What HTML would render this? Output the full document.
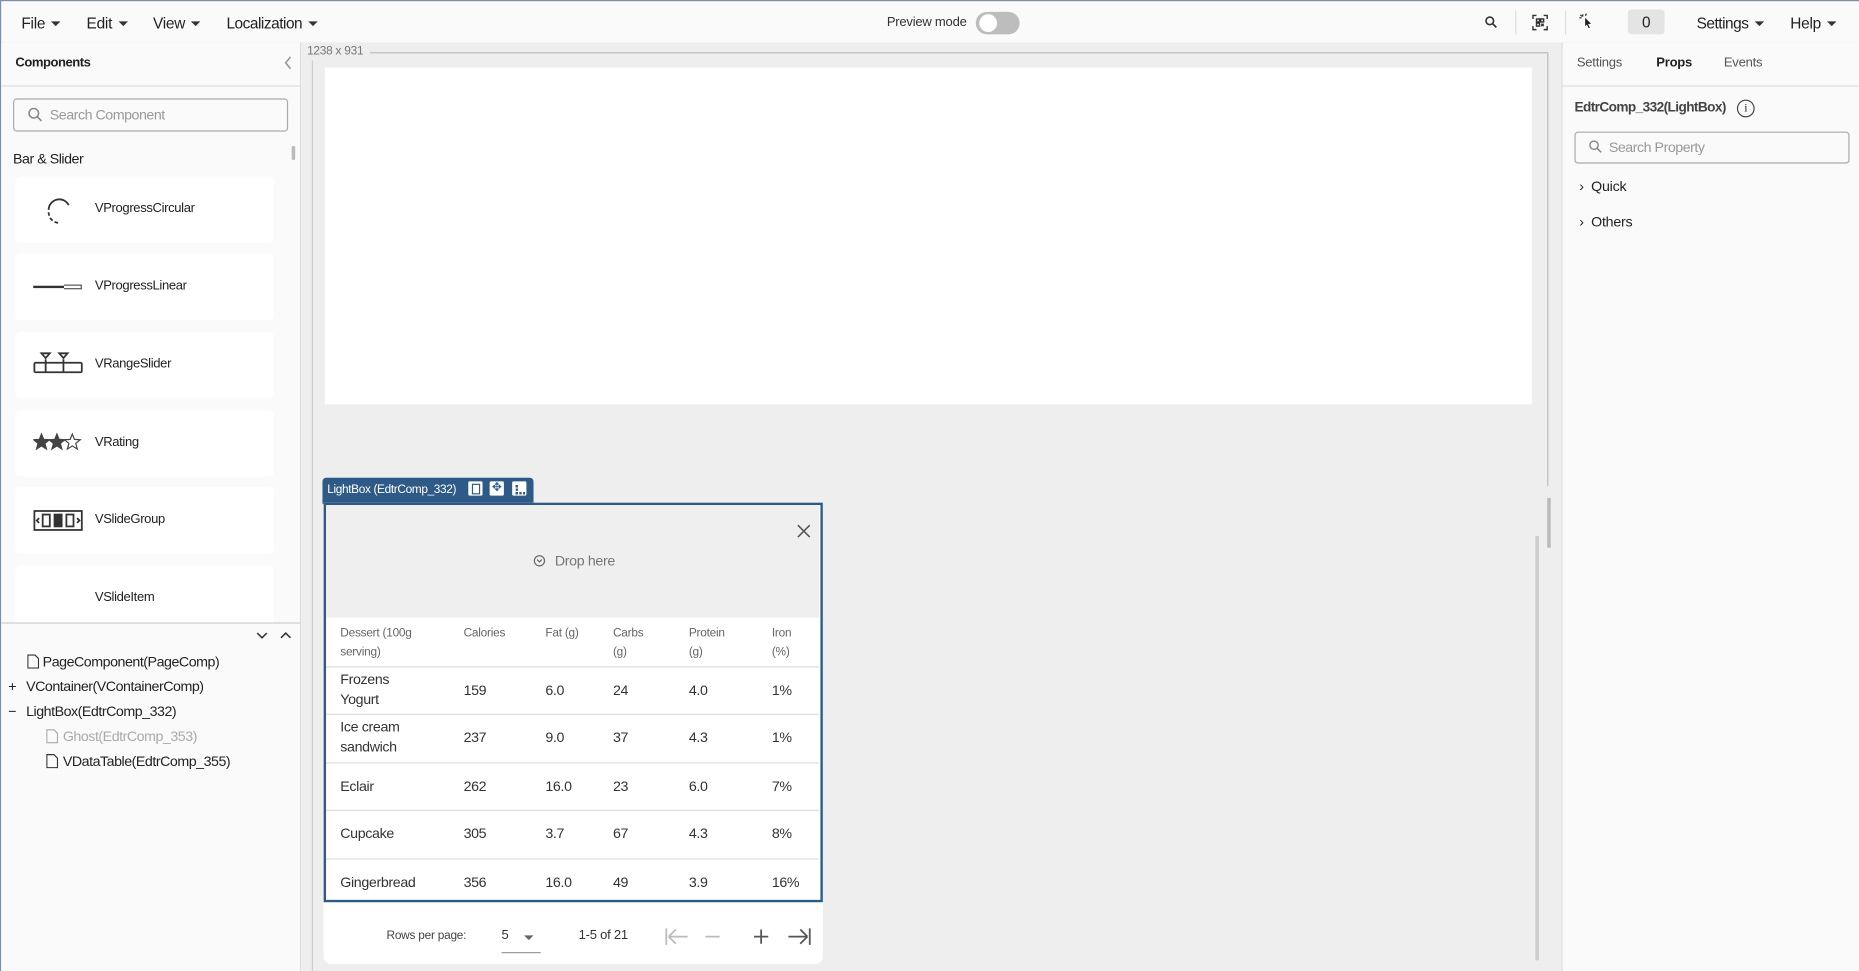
<!DOCTYPE html>
<html><head><meta charset="utf-8"><style>
html,body{margin:0;padding:0;width:1859px;height:971px;overflow:hidden;background:#fafafa}
#w{position:absolute;left:0;top:0;width:1568px;height:819px;transform:scale(1.18559);transform-origin:0 0;font-family:"Liberation Sans",sans-serif;color:#222;font-size:12px;letter-spacing:-0.2px}
.a{position:absolute;white-space:nowrap}
.caret{display:inline-block;width:0;height:0;border-left:4px solid transparent;border-right:4px solid transparent;border-top:4px solid #333;margin-left:5px;vertical-align:2px}
.card{position:absolute;left:13px;width:218px;height:56px;background:#fff;border-radius:4px}
.card span{position:absolute;left:67px;top:21px;font-size:11px;letter-spacing:-0.3px}
.th{position:absolute;font-size:10px;color:#666;line-height:16px}
.td{position:absolute;font-size:12px;color:#333;line-height:17px;letter-spacing:-0.3px}
.rl{position:absolute;left:275px;width:416px;height:1px;background:#ddd}
</style></head><body><div id="w">
<div class="a" style="left:0;top:0;width:1568px;height:35px;background:#fafafa;border-bottom:1px solid #ddd;border-top:1px solid #7a90a8"></div>
<div class="a" style="left:0;top:0;width:1px;height:819px;background:#7a90a8"></div>
<div class="a" style="left:18px;top:12px;font-size:13px">File<i class="caret"></i></div>
<div class="a" style="left:73px;top:12px;font-size:13px">Edit<i class="caret"></i></div>
<div class="a" style="left:129px;top:12px;font-size:13px">View<i class="caret"></i></div>
<div class="a" style="left:191px;top:12px;font-size:13px;letter-spacing:-0.4px">Localization<i class="caret"></i></div>
<div class="a" style="left:748px;top:13px;font-size:11px;color:#333">Preview mode</div>
<div class="a" style="left:823px;top:10px;width:37px;height:19px;border-radius:10px;background:#bdbdbd"></div>
<div class="a" style="left:826px;top:12px;width:15px;height:15px;border-radius:50%;background:#fff"></div>
<svg class="a" style="left:1252px;top:13px" width="11" height="11" viewBox="0 0 12 12"><circle cx="5" cy="5" r="3.5" fill="none" stroke="#333" stroke-width="1.5"/><path d="M7.5 7.5L11 11" stroke="#333" stroke-width="1.6"/></svg>
<div class="a" style="left:1278px;top:9px;width:1px;height:20px;background:#ddd"></div>
<svg class="a" style="left:1292px;top:12px" width="14" height="14" viewBox="0 0 14 14" fill="none" stroke="#333" stroke-width="1.2"><path d="M1 4V1h3M10 1h3v3M13 10v3h-3M4 13H1v-3"/><rect x="4" y="4" width="2.5" height="2.5"/><rect x="7.5" y="4" width="2.5" height="2.5"/><rect x="4" y="7.5" width="2.5" height="2.5"/><path d="M8 8l2 2M10 8l-2 2"/></svg>
<div class="a" style="left:1320px;top:9px;width:1px;height:20px;background:#ddd"></div>
<svg class="a" style="left:1332px;top:11px" width="12" height="14" viewBox="0 0 12 14"><path d="M5 4l5 5-2.5 .3 1.5 3-1 .5-1.5-3L5 11z" fill="#222"/><path d="M3 1v2M0 4h2M1 1.5l1.3 1.3M6 0.5l-.7 1.8" stroke="#222" stroke-width="1"/></svg>
<div class="a" style="left:1373px;top:8px;width:31px;height:21px;background:#e4e4e4;border-radius:3px;text-align:center;line-height:21px;font-size:13px">0</div>
<div class="a" style="left:1431px;top:12px;font-size:13px;letter-spacing:-0.4px">Settings<i class="caret"></i></div>
<div class="a" style="left:1510px;top:12px;font-size:13px">Help<i class="caret"></i></div>

<div class="a" style="left:1px;top:36px;width:252px;height:783px;background:#fafafa;border-right:1px solid #ddd"></div>
<div class="a" style="left:13px;top:47px;font-size:11px;font-weight:bold;letter-spacing:-0.4px">Components</div>
<svg class="a" style="left:239px;top:47px" width="8" height="12" viewBox="0 0 8 12"><path d="M6 1L2 6l4 5" fill="none" stroke="#999" stroke-width="1.4"/></svg>
<div class="a" style="left:1px;top:72px;width:252px;height:1px;background:#ddd"></div>
<div class="a" style="left:11px;top:83px;width:230px;height:26px;border:1px solid #aaa;border-radius:3px;background:#fafafa"></div>
<svg class="a" style="left:23px;top:90px" width="13" height="13" viewBox="0 0 13 13"><circle cx="5.5" cy="5.5" r="4" fill="none" stroke="#888" stroke-width="1.3"/><path d="M8.5 8.5L12 12" stroke="#888" stroke-width="1.4"/></svg>
<div class="a" style="left:42px;top:90px;font-size:12px;color:#999;letter-spacing:-0.4px">Search Component</div>
<div class="a" style="left:11px;top:127px;font-size:12px;color:#222;letter-spacing:-0.4px">Bar &amp; Slider</div>
<div class="a" style="left:246px;top:123px;width:3px;height:12px;background:#bbb;border-radius:2px"></div>
<div style="position:absolute;left:0;top:140px;width:253px;height:385px;overflow:hidden">
<div class="card" style="top:9px"><span>VProgressCircular</span>
<svg style="position:absolute;left:22px;top:14px" width="28" height="28" viewBox="0 0 28 28"><path d="M6 14a9 9 0 0 1 17-4" fill="none" stroke="#333" stroke-width="1.5"/><path d="M6 16a9 9 0 0 0 9 9" fill="none" stroke="#333" stroke-width="1.5" stroke-dasharray="3 2"/></svg></div>
<div class="card" style="top:74px"><span>VProgressLinear</span><div style="position:absolute;left:15px;top:27px;width:26px;height:2px;background:#333"></div><div style="position:absolute;left:41px;top:26px;width:14px;height:2px;border:1px solid #555;border-left:none"></div></div>
<div class="card" style="top:140px"><span>VRangeSlider</span>
<svg style="position:absolute;left:15px;top:16px" width="42" height="22" viewBox="0 0 42 22" fill="none" stroke="#333" stroke-width="1.5"><path d="M7 2h7l-3.5 4zM22 2h7l-3.5 4z"/><rect x="1" y="10" width="40" height="8" rx="1"/><path d="M10.5 7v11M25.5 7v11"/></svg></div>
<div class="card" style="top:206px"><span>VRating</span>
<svg style="position:absolute;left:15px;top:19px" width="42" height="16" viewBox="0 0 42 16"><g stroke="#444" stroke-width="1"><path id="s" d="M7 1l1.8 4.6 4.9.3-3.8 3.1 1.3 4.8L7 11.1 2.8 13.8l1.3-4.8L.3 5.9l4.9-.3z" fill="#444"/><path d="M20 1l1.8 4.6 4.9.3-3.8 3.1 1.3 4.8L20 11.1l-4.2 2.7 1.3-4.8-3.8-3.1 4.9-.3z" fill="#444"/><path d="M33 1l1.8 4.6 4.9.3-3.8 3.1 1.3 4.8L33 11.1l-4.2 2.7 1.3-4.8-3.8-3.1 4.9-.3z" fill="none"/></g></svg></div>
<div class="card" style="top:271px"><span>VSlideGroup</span>
<svg style="position:absolute;left:15px;top:19px" width="42" height="18" viewBox="0 0 42 18" fill="none" stroke="#333" stroke-width="1.5"><rect x="1" y="1" width="40" height="16"/><rect x="8" y="4" width="6" height="10"/><rect x="18" y="4" width="6" height="10" fill="#333"/><rect x="28" y="4" width="6" height="10"/><path d="M5 7l-2 2 2 2M37 7l2 2-2 2"/></svg></div>
<div class="card" style="top:337px"><span>VSlideItem</span></div>
</div>
<div class="a" style="left:1px;top:525px;width:252px;height:1px;background:#ccc"></div>
<svg class="a" style="left:216px;top:532px" width="32" height="8" viewBox="0 0 32 8" fill="none" stroke="#333" stroke-width="1.3"><path d="M1 2l4 4 4-4M21 6l4-4 4 4"/></svg>
<svg class="a" style="left:23px;top:552px" width="10" height="12" viewBox="0 0 10 12" fill="none" stroke="#333"><path d="M.5.5h6l3 3v8h-9z"/></svg>
<div class="a" style="left:36px;top:551px;font-size:12px;letter-spacing:-0.4px">PageComponent(PageComp)</div>
<div class="a" style="left:7px;top:572px;font-size:12px">+</div>
<div class="a" style="left:22px;top:572px;font-size:12px;letter-spacing:-0.4px">VContainer(VContainerComp)</div>
<div class="a" style="left:7px;top:593px;font-size:12px">−</div>
<div class="a" style="left:22px;top:593px;font-size:12px;letter-spacing:-0.4px">LightBox(EdtrComp_332)</div>
<svg class="a" style="left:39px;top:615px" width="10" height="12" viewBox="0 0 10 12" fill="none" stroke="#aaa"><path d="M.5.5h6l3 3v8h-9z"/></svg>
<div class="a" style="left:53px;top:614px;font-size:12px;color:#aaa;letter-spacing:-0.4px">Ghost(EdtrComp_353)</div>
<svg class="a" style="left:39px;top:636px" width="10" height="12" viewBox="0 0 10 12" fill="none" stroke="#333"><path d="M.5.5h6l3 3v8h-9z"/></svg>
<div class="a" style="left:53px;top:635px;font-size:12px;letter-spacing:-0.4px">VDataTable(EdtrComp_355)</div>

<div class="a" style="left:254px;top:36px;width:1063px;height:783px;background:#edeeed"></div>
<div class="a" style="left:259px;top:38px;font-size:10px;color:#777">1238 x 931</div>
<div class="a" style="left:312px;top:44px;width:993px;height:1px;background:#bbb"></div>
<div class="a" style="left:1305px;top:44px;width:1px;height:366px;background:#bbb"></div>
<div class="a" style="left:263px;top:51px;width:1px;height:768px;background:#ccc"></div>
<div class="a" style="left:274px;top:57px;width:1018px;height:284px;background:#fff"></div>
<div class="a" style="left:1295px;top:452px;width:3px;height:358px;background:#ccc"></div>
<div class="a" style="left:1305px;top:420px;width:3px;height:42px;background:#bbb"></div>

<div class="a" style="left:272px;top:403px;width:178px;height:22px;background:#2d5a87;border-radius:3px 3px 0 0"></div>
<div class="a" style="left:276px;top:408px;font-size:10px;color:#fff;letter-spacing:-0.3px">LightBox (EdtrComp_332)</div>
<div class="a" style="left:395px;top:406px;width:12px;height:12px;background:#fff;border-radius:1px"></div>
<div class="a" style="left:413px;top:406px;width:12px;height:12px;background:#fff;border-radius:1px;font-size:10px;text-align:center;line-height:12px;color:#2d5a87">✥</div>
<div class="a" style="left:432px;top:406px;width:12px;height:12px;background:#fff;border-radius:1px"></div>
<div class="a" style="left:398px;top:408px;width:5px;height:7px;border:1px solid #2d5a87"></div>
<div class="a" style="left:435px;top:409px;width:6px;height:6px;border-left:2px dotted #2d5a87;border-bottom:2px dotted #2d5a87"></div>
<div class="a" style="left:273px;top:761px;width:421px;height:52px;background:#fff;border-radius:0 0 6px 6px"></div>
<div class="a" style="left:273px;top:424px;width:417px;height:333px;border:2px solid #2d5a87;background:#fff"></div>
<div class="a" style="left:275px;top:426px;width:416px;height:95px;background:#efefef"></div>
<svg class="a" style="left:672px;top:442px" width="12" height="12" viewBox="0 0 12 12" stroke="#555" stroke-width="1.3"><path d="M1 1l10 10M11 1L1 11"/></svg>
<svg class="a" style="left:450px;top:468px" width="10" height="10" viewBox="0 0 10 10" fill="none" stroke="#666"><circle cx="5" cy="5" r="4.3"/><path d="M3 4l2 2 2-2"/></svg>
<div class="a" style="left:468px;top:466px;font-size:12px;color:#777;letter-spacing:-0.3px">Drop here</div>
<div class="th" style="left:287px;top:527px">Dessert (100g<br>serving)</div>
<div class="th" style="left:391px;top:527px">Calories</div>
<div class="th" style="left:460px;top:527px">Fat (g)</div>
<div class="th" style="left:517px;top:527px">Carbs<br>(g)</div>
<div class="th" style="left:581px;top:527px">Protein<br>(g)</div>
<div class="th" style="left:651px;top:527px">Iron<br>(%)</div>
<div class="rl" style="top:562px"></div><div class="rl" style="top:602px"></div><div class="rl" style="top:643px"></div><div class="rl" style="top:683px"></div><div class="rl" style="top:724px"></div>
<div class="td" style="left:287px;top:565px">Frozens<br>Yogurt</div><div class="td" style="left:391px;top:574px">159</div><div class="td" style="left:460px;top:574px">6.0</div><div class="td" style="left:517px;top:574px">24</div><div class="td" style="left:581px;top:574px">4.0</div><div class="td" style="left:651px;top:574px">1%</div>
<div class="td" style="left:287px;top:605px">Ice cream<br>sandwich</div><div class="td" style="left:391px;top:614px">237</div><div class="td" style="left:460px;top:614px">9.0</div><div class="td" style="left:517px;top:614px">37</div><div class="td" style="left:581px;top:614px">4.3</div><div class="td" style="left:651px;top:614px">1%</div>
<div class="td" style="left:287px;top:655px">Eclair</div><div class="td" style="left:391px;top:655px">262</div><div class="td" style="left:460px;top:655px">16.0</div><div class="td" style="left:517px;top:655px">23</div><div class="td" style="left:581px;top:655px">6.0</div><div class="td" style="left:651px;top:655px">7%</div>
<div class="td" style="left:287px;top:695px">Cupcake</div><div class="td" style="left:391px;top:695px">305</div><div class="td" style="left:460px;top:695px">3.7</div><div class="td" style="left:517px;top:695px">67</div><div class="td" style="left:581px;top:695px">4.3</div><div class="td" style="left:651px;top:695px">8%</div>
<div class="td" style="left:287px;top:736px">Gingerbread</div><div class="td" style="left:391px;top:736px">356</div><div class="td" style="left:460px;top:736px">16.0</div><div class="td" style="left:517px;top:736px">49</div><div class="td" style="left:581px;top:736px">3.9</div><div class="td" style="left:651px;top:736px">16%</div>
<div class="a" style="left:326px;top:784px;font-size:10px;color:#444">Rows per page:</div>
<div class="a" style="left:423px;top:783px;font-size:11px;color:#333">5</div>
<div class="a" style="left:442px;top:789px;border-left:4px solid transparent;border-right:4px solid transparent;border-top:4px solid #666"></div>
<div class="a" style="left:423px;top:803px;width:33px;height:1px;background:#999"></div>
<div class="a" style="left:488px;top:783px;font-size:11px;color:#333">1-5 of 21</div>
<svg class="a" style="left:561px;top:782px" width="124" height="16" viewBox="0 0 124 16" fill="none" stroke-width="1.5"><path d="M1 1v14M3 8h16M3 8l6-6M3 8l6 6" stroke="#bbb"/><path d="M34 8h12" stroke="#bbb"/><path d="M75 8h12M81 2v12" stroke="#555"/><path d="M104 8h16M120 8l-6-6M120 8l-6 6M122 1v14" stroke="#555"/></svg>

<div class="a" style="left:1317px;top:36px;width:251px;height:783px;background:#fafafa;border-left:1px solid #ddd"></div>
<div class="a" style="left:1330px;top:47px;font-size:11px;color:#555">Settings</div>
<div class="a" style="left:1397px;top:47px;font-size:11px;font-weight:bold">Props</div>
<div class="a" style="left:1454px;top:47px;font-size:11px;color:#555">Events</div>
<div class="a" style="left:1318px;top:72px;width:250px;height:1px;background:#ddd"></div>
<div class="a" style="left:1328px;top:85px;font-size:11.5px;font-weight:bold;color:#444;letter-spacing:-0.5px">EdtrComp_332(LightBox)</div>
<div class="a" style="left:1465px;top:84px;width:13px;height:13px;border:1px solid #444;border-radius:50%;font-size:10px;text-align:center;line-height:13px;font-family:'Liberation Serif',serif">i</div>
<div class="a" style="left:1328px;top:111px;width:230px;height:25px;border:1px solid #aaa;border-radius:3px"></div>
<svg class="a" style="left:1340px;top:118px" width="11" height="11" viewBox="0 0 11 11"><circle cx="4.5" cy="4.5" r="3.5" fill="none" stroke="#888" stroke-width="1.2"/><path d="M7 7l3.5 3.5" stroke="#888" stroke-width="1.3"/></svg>
<div class="a" style="left:1357px;top:117px;font-size:12px;color:#999;letter-spacing:-0.4px">Search Property</div>
<div class="a" style="left:1332px;top:150px;font-size:12px">›&nbsp; Quick</div>
<div class="a" style="left:1332px;top:180px;font-size:12px">›&nbsp; Others</div>
</div></body></html>
